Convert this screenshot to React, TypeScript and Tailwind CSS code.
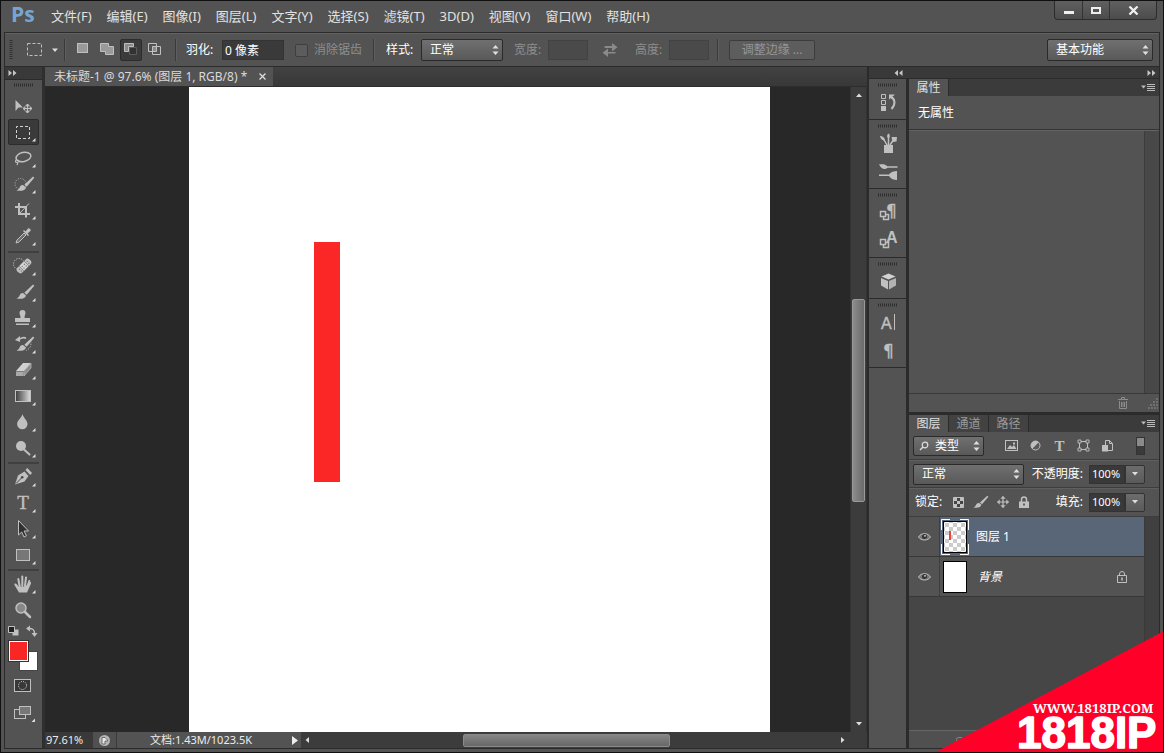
import React, { useState } from "react";
import type { ReactNode } from "react";

const INK = "#c0c0c0";

function Brush() {
  return (
    <>
      <path d="M25 5.5l1.3 1.2-7.6 9-2.4-2z" fill={INK} />
      <path d="M15.4 14.2l2.6 2.2c-.6 3-4.600 4-9.500 3 2-.6 2.600-1.800 3.200-3.100.7-1.700 2.200-2.600 3.700-2.100z" fill={INK} />
    </>
  );
}

function MoveCross({ x, y, r }: { x: number; y: number; r: number }) {
  return (
    <g transform={`translate(${x} ${y})`}>
      <path d={`M0 ${-r}V${r}M${-r} 0H${r}`} stroke={INK} strokeWidth="1.200" />
      {[0, 90, 180, 270].map((a) => (
        <path key={a} transform={`rotate(${a})`} d={`M-2 ${-r + 2.2}L0 ${-r}L2 ${-r + 2.2}`} stroke={INK} fill={INK} />
      ))}
    </g>
  );
}

type ToolDef = { name: string; plain?: boolean; icon: ReactNode };

const groups: ToolDef[][] = [
  [
    { name: "移动工具", plain: true, icon: <><path d="M7.500 7v11l3-3.500h4.500z" fill={INK} /><MoveCross x={19.5} y={15.5} r={4.5} /></> },
    { name: "矩形选框工具", icon: <rect x="8.500" y="7.500" width="13" height="12" fill="none" stroke="#d2d2d2" strokeDasharray="3 2" strokeDashoffset="1.500" /> },
    {
      name: "套索工具",
      icon: (
        <g fill="none" stroke={INK} strokeWidth="1.500">
          <ellipse cx="15.500" cy="12" rx="7.500" ry="4.500" transform="rotate(-12 15.500 12)" />
          <path d="M9 14.500c-2 .5-2 3 0 3s2.500-2 .8-2.500M9.500 17.500c.5 1 0 2-.8 2.500" strokeWidth="1.200" />
        </g>
      ),
    },
    { name: "快速选择工具", icon: <><circle cx="12.500" cy="13" r="5.500" fill="none" stroke={INK} strokeDasharray="1 1.500" /><Brush /></> },
    {
      name: "裁剪工具",
      icon: (
        <g fill="none" stroke={INK} strokeWidth="2">
          <path d="M11 6v11h11M7 10h11v10.500" />
          <path d="M12 16l9-9.500" strokeWidth="1" />
        </g>
      ),
    },
    {
      name: "吸管工具",
      icon: (
        <>
          <path d="M8 20l1-3 7-7 2 2-7 7z" fill="#6d6d6d" stroke={INK} />
          <path d="M15 8l1-1 1.500 1.500 2.500-3c1-1 3.500 1 2.500 2.500l-3 2.500 1.500 1.500-1 1z" fill={INK} />
        </>
      ),
    },
  ],
  [
    {
      name: "污点修复画笔工具",
      icon: (
        <>
          <circle cx="11" cy="11" r="5.500" fill="none" stroke="#d8d8d8" strokeDasharray="1 1.500" />
          <g transform="rotate(-45 16 13)">
            <rect x="7.500" y="9.500" width="17" height="7" rx="3" fill={INK} />
            <rect x="12.500" y="9.500" width="7" height="7" fill="#d5d5d5" stroke="#777" strokeWidth=".7" />
            <path d="M14 12h1M17 12h1M14 14.500h1M17 14.500h1M10 12h1M10 14.500h1M21 12h1M21 14.500h1" stroke="#555" />
          </g>
        </>
      ),
    },
    { name: "画笔工具", icon: <Brush /> },
    {
      name: "仿制图章工具",
      icon: <path d="M14.500 5a3 3 0 0 1 3 3c0 1.500-1 2-1 5h5.500v4H7v-4h5.500c0-3-1-3.500-1-5a3 3 0 0 1 3-3zM8 18.500h13V20H8z" fill={INK} />,
    },
    {
      name: "历史记录画笔工具",
      icon: (
        <>
          <Brush />
          <path d="M11 8.500c3-2 6-2 7-1" fill="none" stroke={INK} strokeWidth="1.500" />
          <path d="M12 5v6L7 9z" fill={INK} />
          <path d="M22.500 10c1.500 5-1 8-4.500 9.500" fill="none" stroke={INK} strokeDasharray="1.200 1.500" />
        </>
      ),
    },
    {
      name: "橡皮擦工具",
      icon: (
        <>
          <path d="M8 14l7-8h8l-7 8z" fill="#d0d0d0" />
          <path d="M8 14.500h7.500V19H8z" fill="#a9a9a9" />
          <path d="M16 14.500l7-8V11l-7 8z" fill="#8a8a8a" stroke={INK} strokeWidth=".7" />
        </>
      ),
    },
    {
      name: "渐变工具",
      icon: (
        <>
          <defs>
            <linearGradient id="ramp"><stop stopColor="#3c3c3c" /><stop offset="1" stopColor="#dedede" /></linearGradient>
          </defs>
          <rect x="7.500" y="7.500" width="15" height="11" fill="url(#ramp)" stroke={INK} />
        </>
      ),
    },
    { name: "模糊工具", icon: <path d="M14.500 5c1 4 5 6.500 5 10a5.200 5.200 0 0 1-10.400 0c0-3.500 4.400-6 5.400-10z" fill={INK} /> },
    { name: "减淡工具", icon: <><circle cx="13" cy="11" r="5" fill={INK} /><path d="M16 14.500l5.500 5" stroke={INK} strokeWidth="2" strokeLinecap="round" /></> },
  ],
  [
    {
      name: "钢笔工具",
      icon: (
        <>
          <path d="M7 20.500L10 11.500l6.500-4 4 4.500-4 5.500z" fill={INK} />
          <path d="M8 19.500l5.500-5.500" stroke="#484848" />
          <circle cx="14.200" cy="13.200" r="1.300" fill="#484848" />
          <path d="M17.500 6l1.800-2 4.700 5-1.800 2z" fill={INK} />
        </>
      ),
    },
    { name: "横排文字工具", icon: <text x="15" y="19" textAnchor="middle" fontFamily="Liberation Serif, serif" fontSize="19" fill={INK} stroke={INK} strokeWidth=".4">T</text> },
    { name: "路径选择工具", icon: <path d="M10.500 4.500V19l3.200-3 2.300 5 2.400-1.200-2.300-4.800h4.400z" fill="#303030" stroke={INK} /> },
    { name: "矩形工具", icon: <rect x="8.500" y="7.500" width="13" height="11" fill="#777" stroke={INK} /> },
  ],
  [
    {
      name: "抓手工具",
      icon: (
        <>
          <path d="M11 21.500L6.500 14c-.8-1.500 1.300-2 2.200-.8L11 16l6.500-.5 3.500-4c1-1.200 2.500-.3 2 1l-4 9z" fill={INK} />
          <path d="M11.800 16L10.300 8M14.300 15V5.500M17 15l1-8.500M19.300 16l2-6" stroke={INK} strokeWidth="2" strokeLinecap="round" />
        </>
      ),
    },
    {
      name: "缩放工具",
      plain: true,
      icon: (
        <>
          <circle cx="13" cy="11" r="5" fill="#888" stroke={INK} strokeWidth="1.500" />
          <path d="M17 15l5 5" stroke={INK} strokeWidth="2.500" strokeLinecap="round" />
        </>
      ),
    },
  ],
];

function Arrows({ className = "" }: { className?: string }) {
  return (
    <svg width="7" height="10" viewBox="0 0 7 10" aria-hidden="true" className={`pointer-events-none absolute ${className}`}>
      <path d="M3.500 0L6.500 3.500h-6zM3.500 10L.5 6.500h6z" fill="#e0e0e0" />
    </svg>
  );
}

function Picker({ id, label, options, className = "" }: { id: string; label?: string; options: string[]; className?: string }) {
  return (
    <span className={`relative flex items-center ${className}`}>
      <select
        id={id}
        aria-label={label}
        className="h-full w-full appearance-none rounded-xs border border-[#2a2a2a] bg-linear-to-b from-[#707070] to-[#595959] pl-2 text-xs leading-4 text-white outline-none"
      >
        {options.map((o) => <option key={o}>{o}</option>)}
      </select>
      <Arrows className="right-1" />
    </span>
  );
}

function Chevrons({ flip = false }: { flip?: boolean }) {
  return (
    <svg width="9" height="6" viewBox="0 0 9 6" aria-hidden="true" className={flip ? "rotate-180" : ""}>
      <path d="M0.500 0L4 3 .5 6zM5 0l3.500 3L5 6z" fill="#c6c6c6" />
    </svg>
  );
}

function Grip() {
  return (
    <svg width="20" height="4" viewBox="0 0 20 4" aria-hidden="true">
      <path d="M0 2H20" stroke="#2e2e2e" strokeWidth="3" strokeDasharray="1 1" />
    </svg>
  );
}

function PanelMenu() {
  return (
    <button aria-label="面板菜单" className="mr-1 ml-auto flex h-4 items-center self-center">
      <svg width="14" height="9" viewBox="0 0 14 9" aria-hidden="true">
        <path d="M0 2.500h5L2.500 5.500z" fill="#bbb" />
        <path d="M6 1.500h8M6 3.500h8M6 5.500h8M6 7.500h8" stroke="#bbb" />
      </svg>
    </button>
  );
}

function Divider({ className = "" }: { className?: string }) {
  return <span className={`h-[22px] w-0.5 shrink-0 border-r border-l border-r-[#5e5e5e] border-l-[#3a3a3a] ${className}`} />;
}

const menus = ["文件(F)", "编辑(E)", "图像(I)", "图层(L)", "文字(Y)", "选择(S)", "滤镜(T)", "3D(D)", "视图(V)", "窗口(W)", "帮助(H)"];

function MenuBar() {
  return (
    <header className="flex h-[31px] shrink-0 items-start">
      <span className="ml-[10px] w-[34px] font-['Open_Sans',sans-serif] text-[21px] leading-[27px] font-bold text-[#78a5d0]">Ps</span>
      <nav className="flex flex-1 gap-[15px] pt-[6px] pl-[6px]">
        {menus.map((m) => (
          <button key={m} className="text-[13px] leading-[18px] whitespace-nowrap text-[#e2e2e2]">{m}</button>
        ))}
      </nav>
      <div className="mr-[6px] flex h-[19px] rounded-b border border-t-0 border-[#2c2c2c] bg-linear-to-b from-[#606060] to-[#4c4c4c]">
        <button aria-label="最小化" className="flex w-7 items-center justify-center border-r border-[#333]">
          <span className="mt-[5px] h-[3px] w-[10px] bg-[#eee]" />
        </button>
        <button aria-label="最大化" className="flex w-[27px] items-center justify-center border-r border-[#333]">
          <span className="h-[7px] w-[10px] border-2 border-[#eee]" />
        </button>
        <button aria-label="关闭" className="flex w-[46px] items-center justify-center">
          <svg width="11" height="9" viewBox="0 0 11 9" aria-hidden="true"><path d="M1.500.5l8 8M9.500.5l-8 8" stroke="#eee" strokeWidth="2.300" /></svg>
        </button>
      </div>
    </header>
  );
}

const modes: { name: string; icon: ReactNode }[] = [
  { name: "新选区", icon: <rect x="4.500" y="3.500" width="10" height="9" fill="#9a9a9a" stroke={INK} /> },
  { name: "添加到选区", icon: <path d="M3.500 3.500h8v3h5v8h-8v-3h-5z" fill="#9a9a9a" stroke={INK} /> },
  { name: "从选区减去", icon: <><path d="M3.500 3.500h9v3h-5v5h-4z" fill="#8a8a8a" stroke={INK} /><path d="M8.500 7.500h7v7h-7z" fill="#333" stroke="#5c5c5c" /></> },
  { name: "与选区交叉", icon: <><path d="M7 6h5v5H7z" fill="#8a8a8a" /><path d="M3.500 3.500h8v8h-8zM7.500 6.500h8v8h-8z" fill="none" stroke={INK} /></> },
];

function OptionsBar() {
  const [mode, setMode] = useState(2);
  return (
    <section aria-label="选项" className="flex h-[34px] shrink-0 items-center border-t border-b border-t-[#626262] border-b-[#2b2b2b] text-xs leading-4 text-white">
      <svg width="4" height="20" viewBox="0 0 4 20" aria-hidden="true" className="ml-1 shrink-0"><path d="M2 0V20" stroke="#333" strokeWidth="3" strokeDasharray="1 1" /></svg>
      <button aria-label="矩形选框工具预设" className="ml-[13px] flex shrink-0 items-center">
        <svg width="34" height="16" viewBox="0 0 34 16" aria-hidden="true">
          <rect x="1.500" y="1.500" width="14" height="12" fill="none" stroke={INK} strokeDasharray="3 2" />
          <path d="M26 6.500h6l-3 3.500z" fill="#ddd" />
        </svg>
      </button>
      <Divider className="ml-1" />
      <div className="ml-[6px] flex gap-0.5">
        {modes.map((m, i) => (
          <button
            key={m.name}
            aria-label={m.name}
            aria-pressed={mode === i}
            onClick={() => setMode(i)}
            className={mode === i ? "size-[22px] rounded-xs border border-[#2c2c2c] bg-[#3b3b3b]" : "size-[22px] border border-transparent"}
          >
            <svg width="20" height="20" viewBox="0 0 20 20" aria-hidden="true">{m.icon}</svg>
          </button>
        ))}
      </div>
      <Divider className="ml-[9px]" />
      <label htmlFor="feather" className="ml-[9px] w-[36px] shrink-0 whitespace-nowrap">羽化:</label>
      <input id="feather" defaultValue="0 像素" className="h-5 w-[62px] border border-[#333] bg-[#3a3a3a] px-0.5 outline-none" />
      <label className="ml-[11px] flex shrink-0 items-center gap-[6px] text-[#8e8e8e]">
        <input type="checkbox" disabled className="size-[13px] appearance-none rounded-xs border border-[#3f3f3f] bg-[#5c5c5c]" />
        消除锯齿
      </label>
      <Divider className="ml-[11px]" />
      <label htmlFor="style" className="ml-[11px] w-[35px] shrink-0 whitespace-nowrap">样式:</label>
      <Picker id="style" options={["正常", "固定比例", "固定大小"]} className="h-[22px] w-[82px]" />
      <label htmlFor="sel-w" className="ml-[11px] w-[34px] shrink-0 whitespace-nowrap text-[#8e8e8e]">宽度:</label>
      <input id="sel-w" disabled className="h-5 w-10 border border-[#424242] bg-[#4a4a4a]" />
      <button aria-label="高度和宽度互换" disabled className="ml-[14px]">
        <svg width="16" height="14" viewBox="0 0 16 14" aria-hidden="true">
          <path d="M3 3h7V.5l5 4.300H3z" fill="#8a8a8a" />
          <path d="M10 0l5.500 4.200L10 8.500V5H2.500V3.500H10zM6 5.500L.5 9.800 6 14v-3.500h7.500V9H6z" fill="#8a8a8a" />
        </svg>
      </button>
      <label htmlFor="sel-h" className="ml-[17px] w-[34px] shrink-0 whitespace-nowrap text-[#8e8e8e]">高度:</label>
      <input id="sel-h" disabled className="h-5 w-10 border border-[#424242] bg-[#4a4a4a]" />
      <Divider className="ml-2" />
      <button disabled className="ml-[10px] h-5 w-[86px] shrink-0 rounded-xs border border-[#3c3c3c] bg-[#5d5d5d] leading-4 text-[#959595]">调整边缘 ...</button>
      <Picker id="workspace" label="工作区" options={["基本功能", "绘画", "摄影"]} className="mr-[6px] ml-auto h-[22px] w-[106px]" />
    </section>
  );
}

function Toolbar() {
  const [active, setActive] = useState("矩形选框工具");
  return (
    <aside aria-label="工具" className="flex w-10 shrink-0 flex-col border-r-3 border-[#2f2f2f] bg-[#535353]">
      <div className="flex h-[13px] shrink-0 items-center border-b border-[#2b2b2b] bg-[#393939] pl-[3px]"><Chevrons /></div>
      <div className="flex h-[13px] shrink-0 justify-center pt-[3px]"><Grip /></div>
      {groups.map((g, gi) => (
        <div key={gi} className={gi ? "mx-[3px] border-t-2 border-[#404040] pb-px" : "mx-[3px] pb-0.5"}>
          {g.map((t) => (
            <button
              key={t.name}
              aria-label={t.name}
              aria-pressed={t.name === active}
              onClick={() => setActive(t.name)}
              className={t.name === active ? "block h-[26px] w-[31px] rounded-xs border border-[#2b2b2b] bg-[#3a3a3a]" : "block h-[26px] w-[31px] border border-transparent"}
            >
              <svg width="29" height="24" viewBox="1 1 29 24" aria-hidden="true">
                {t.icon}
                {!t.plain && <path d="M27.500 19v3.500H24z" fill="#ddd" />}
              </svg>
            </button>
          ))}
        </div>
      ))}
      <div className="flex h-[14px] items-center pl-[3px]">
        <button aria-label="默认前景色和背景色">
          <svg width="12" height="12" viewBox="0 0 12 12" aria-hidden="true"><path d="M4.500 4.500h6v6h-6z" fill={INK} /><path d="M.5 1.500h6v6h-6z" fill="#222" stroke={INK} /></svg>
        </button>
        <button aria-label="切换前景色和背景色" className="ml-[6px]">
          <svg width="12" height="12" viewBox="0 0 12 12" aria-hidden="true">
            <path d="M3 3.500c4 0 5.500 1 5.500 5" fill="none" stroke={INK} strokeWidth="1.500" />
            <path d="M4 .5v6l-4-3zM5.500 8h6l-3 4z" fill={INK} />
          </svg>
        </button>
      </div>
      <div className="mt-[3px] grid h-[30px] shrink-0 grid-cols-[10px_9px_10px] grid-rows-[10px_10px_10px] pl-1">
        <button aria-label="背景色" className="col-span-2 col-start-2 row-span-2 row-start-2 border border-[#444] bg-white" />
        <button aria-label="前景色" className="z-10 col-span-2 col-start-1 row-span-2 row-start-1 border border-white bg-[#f92626] outline outline-[#333]" />
      </div>
      <button aria-label="以快速蒙版模式编辑" className="mt-2 ml-[9px] h-[14px] w-[18px]">
        <svg width="18" height="14" viewBox="0 0 18 14" aria-hidden="true">
          <rect x=".5" y=".5" width="16" height="12" fill="#383838" stroke={INK} />
          <circle cx="8.500" cy="6.500" r="4" fill="none" stroke="#ddd" strokeDasharray="1 1.100" />
        </svg>
      </button>
      <button aria-label="更改屏幕模式" className="mt-[13px] ml-[9px] h-4 w-[22px]">
        <svg width="22" height="16" viewBox="0 0 22 16" aria-hidden="true">
          <rect x=".5" y="3.500" width="11" height="9" fill="#555" stroke={INK} />
          <rect x="5.500" y=".5" width="11" height="8" fill="#777" stroke={INK} />
          <path d="M21 12.500V16h-3.500z" fill="#ddd" />
        </svg>
      </button>
    </aside>
  );
}

function DocumentArea() {
  return (
    <main className="flex min-w-0 flex-1 flex-col">
      <div className="flex h-5 shrink-0 border-b border-[#2c2c2c] bg-linear-to-b from-[#424242] to-[#383838]">
        <div className="flex items-center bg-[#535353] pr-[5px] pl-[9px] text-xs leading-4 whitespace-nowrap text-[#dadada]">
          <span className="w-[202px]">未标题-1 @ 97.6% (图层 1, RGB/8) *</span>
          <button aria-label="关闭文档" className="flex size-3 items-center justify-center">
            <svg width="7" height="7" viewBox="0 0 7 7" aria-hidden="true"><path d="M.5.5l6 6M6.500.5l-6 6" stroke="#ddd" strokeWidth="1.300" /></svg>
          </button>
        </div>
      </div>
      <div className="flex min-h-0 flex-1">
        <div className="grid min-w-0 flex-1 grid-cols-[144fr_581px_80fr] bg-[#282828]">
          <div className="col-start-2 bg-white pt-[155px] pl-[125px]">
            <div className="h-[240px] w-[26px] bg-[#fb2626]" />
          </div>
        </div>
        <div aria-label="垂直滚动条" className="flex w-[17px] flex-col items-center border-x border-[#333] bg-[#3c3c3c] py-[6px]">
          <svg width="6" height="4" viewBox="0 0 6 4" aria-hidden="true"><path d="M0 4l3-3.500L6 4z" fill="#ddd" /></svg>
          <span className="flex-[203]" />
          <span className="w-[13px] flex-[202] rounded-xs border border-[#999] bg-linear-to-r from-[#8c8c8c] to-[#6b6b6b]" />
          <span className="flex-[221]" />
          <svg width="6" height="4" viewBox="0 0 6 4" aria-hidden="true"><path d="M0 0l3 3.500L6 0z" fill="#ddd" /></svg>
        </div>
      </div>
      <footer className="flex h-4 shrink-0 items-center bg-[#3c3c3c] text-[11px] leading-4 text-[#ececec]">
        <input aria-label="缩放比例" defaultValue="97.61%" className="h-4 w-[48px] bg-[#393939] pl-px outline-none" />
        <span className="flex h-4 w-6 items-center justify-center border-r border-[#3a3a3a] bg-[#505050]">
          <svg width="11" height="11" viewBox="0 0 11 11" aria-hidden="true">
            <circle cx="5.500" cy="5.500" r="5.500" fill="#b5b5b5" />
            <path d="M3 2.500h3l2.500 2.500v1H6v3H3z" fill="#e8e8e8" stroke="#555" strokeWidth=".8" />
          </svg>
        </span>
        <span className="h-4 w-[172px] bg-[#535353] pr-1 text-center whitespace-nowrap">文档:1.43M/1023.5K</span>
        <button aria-label="状态栏选项" className="flex h-4 w-3 items-center justify-center bg-[#535353]">
          <svg width="6" height="9" viewBox="0 0 6 9" aria-hidden="true"><path d="M0 0l6 4.500L0 9z" fill="#eee" /></svg>
        </button>
        <div aria-label="水平滚动条" className="flex flex-1 items-center pl-1">
          <svg width="4" height="6" viewBox="0 0 4 6" aria-hidden="true"><path d="M4 0v6L.5 3z" fill="#ddd" /></svg>
          <span className="flex-[154]" />
          <span className="h-[13px] flex-[206] rounded-xs border border-[#8a8a8a] bg-linear-to-b from-[#858585] to-[#686868]" />
          <span className="flex-[171]" />
          <svg width="4" height="6" viewBox="0 0 4 6" aria-hidden="true"><path d="M0 0v6l3.500-3z" fill="#ddd" /></svg>
          <span className="w-[22px]" />
        </div>
      </footer>
    </main>
  );
}

function Pilcrow({ x, y }: { x: number; y: number }) {
  return <text x={x} y={y} fontFamily="DejaVu Sans, sans-serif" fontSize="17" fill={INK} stroke={INK} strokeWidth=".3">¶</text>;
}

const dock: { name: string; icon: ReactNode }[][] = [
  [
    {
      name: "历史记录",
      icon: (
        <>
          <path d="M3.500 4.500h4v4h-4zM3.500 10.500h4v4h-4z" fill="none" stroke={INK} />
          <path d="M3 16h5v5H3z" fill={INK} />
          <path d="M13 7c4 2 5 7 .5 12" fill="none" stroke={INK} strokeWidth="2" />
          <path d="M11 9.500V4.500h6z" fill={INK} />
        </>
      ),
    },
  ],
  [
    {
      name: "画笔预设",
      icon: (
        <>
          <path d="M6 13h9v8H6z" fill={INK} />
          <path d="M9 13L5 6M10.500 13V4M12 13l4-6" stroke={INK} strokeWidth="1.500" />
          <path d="M2 4c2 0 4.500 1 5 4.500C4.500 8.500 2.500 7 2 4zM10.500 1.500c2 1.500 1.500 4 0 5-1.500-1-2-3.500 0-5zM13.500 5h5.500L18.500 9.500l-4 .5z" fill={INK} />
        </>
      ),
    },
    {
      name: "画笔",
      icon: (
        <>
          <path d="M1 4c3 1 4-1 8.500 2.200h10v1.600h-10C7 10 3 9.500 1 4z" fill={INK} />
          <path d="M1 14.500h10c2-3 5-3.500 8-3.500v9c-3 0-6-1-8-4H1z" fill={INK} />
        </>
      ),
    },
  ],
  [
    {
      name: "段落样式",
      icon: (
        <>
          <Pilcrow x={8} y={16} />
          <path d="M5.500 13.500h5v5h-5z" fill="#535353" stroke={INK} strokeWidth="1.500" />
          <path d="M2.500 10.500h5v5h-5z" fill="#535353" stroke={INK} strokeWidth="1.500" />
        </>
      ),
    },
    {
      name: "字符样式",
      icon: (
        <>
          <text x="8" y="14" fontFamily="Liberation Sans, sans-serif" fontSize="16" fill={INK} fontWeight="700">A</text>
          <path d="M5.500 13.500h5v5h-5z" fill="#535353" stroke={INK} strokeWidth="1.500" />
          <path d="M2.500 10.500h5v5h-5z" fill="#535353" stroke={INK} strokeWidth="1.500" />
        </>
      ),
    },
  ],
  [
    {
      name: "3D",
      icon: (
        <>
          <path d="M10.500 4.500l7 3-7 3-7-3z" fill="#d2d2d2" />
          <path d="M3 9l7 3v8.500l-7-4z" fill={INK} />
          <path d="M18 9l-7 3v8.500l7-4z" fill="#b2b2b2" />
        </>
      ),
    },
  ],
  [
    { name: "字符", icon: <><text x="3" y="18" fontFamily="Liberation Sans, sans-serif" fontSize="16" fill={INK} stroke={INK} strokeWidth=".4">A</text><path d="M16.500 3v16" stroke={INK} /></> },
    { name: "段落", icon: <Pilcrow x={5} y={18} /> },
  ],
];

function Dock() {
  return (
    <div className="flex w-[37px] flex-col">
      {dock.map((g, i) => (
        <div key={i} className="flex flex-col items-center border-b border-[#2b2b2b] pt-[4px]">
          <Grip />
          {g.map((b, j) => (
            <button key={b.name} aria-label={b.name} className={j ? "mb-[4px] h-[24px]" : g.length > 1 ? "mt-1 mb-[4px] h-[24px]" : "mt-px mb-[3px] h-[28px]"}>
              <svg width="20" height="24" viewBox="0 0 20 24" aria-hidden="true">{b.icon}</svg>
            </button>
          ))}
        </div>
      ))}
    </div>
  );
}

function Properties() {
  return (
    <section aria-label="属性" className="flex flex-col">
      <div className="flex h-[17px] bg-[#3b3b3b] text-xs leading-[17px] text-[#e0e0e0]">
        <h2 className="w-10 border-r border-[#2b2b2b] bg-[#535353] text-center">属性</h2>
        <PanelMenu />
      </div>
      <p className="h-[34px] border-b border-[#333] px-[9px] text-xs leading-[34px] text-white">无属性</p>
      <div className="flex h-[263px] border-t border-[#636363]">
        <div className="flex-1" />
        <div className="w-[15px] border-l border-[#3d3d3d] bg-[#484848]" />
      </div>
      <div className="flex h-[19px] items-center justify-end border-t border-[#383838]">
        <button aria-label="删除" className="mr-[18px]">
          <svg width="12" height="12" viewBox="0 0 12 12" aria-hidden="true"><path d="M1 2.500h10M4.500 2V.5h3V2M2.500 4v7.500h7V4M4.500 5v5M6 5v5M7.500 5v5" fill="none" stroke="#8c8c8c" /></svg>
        </button>
        <svg width="12" height="12" viewBox="0 0 12 12" aria-hidden="true"><path d="M9 2h2M6 5h5M3 8h8M1 11h10" stroke="#7a7a7a" strokeDasharray="2 1" strokeWidth="1.500" /></svg>
      </div>
    </section>
  );
}

function Percent({ id }: { id: string }) {
  return (
    <span className="flex h-[19px] w-[56px]">
      <input id={id} defaultValue="100%" className="w-9 border border-[#333] bg-[#393939] pl-0.5 text-[11px] leading-4 text-white outline-none" />
      <button aria-label="展开滑块" className="flex w-5 items-center justify-center rounded-r-xs border border-[#333] bg-linear-to-b from-[#6c6c6c] to-[#5a5a5a]">
        <svg width="6" height="4" viewBox="0 0 6 4" aria-hidden="true"><path d="M0 0h6L3 3.500z" fill="#ddd" /></svg>
      </button>
    </span>
  );
}

function Eye() {
  return (
    <svg width="13" height="9" viewBox="0 0 13 9" aria-hidden="true">
      <path d="M.5 5C3 .5 10 .5 12.500 5 10 9 3 9 .5 5z" fill="#777" stroke={INK} />
      <circle cx="6.500" cy="4.500" r="2.500" fill="#333" />
      <circle cx="7" cy="3.800" r=".9" fill="#ddd" />
    </svg>
  );
}

function LayerThumb({ transparent }: { transparent: boolean }) {
  return transparent ? (
    <svg width="28" height="36" viewBox="0 0 28 36" aria-hidden="true">
      <defs>
        <pattern id="checks" width="8" height="8" patternUnits="userSpaceOnUse">
          <path d="M0 0h8v8H0z" fill="#fff" /><path d="M0 0h4v4H0zM4 4h4v4H4z" fill="#ccc" />
        </pattern>
      </defs>
      <rect x="2.500" y="2.500" width="23" height="31" fill="url(#checks)" stroke="#000" />
      <rect x="8" y="12" width="2" height="9" fill="#f04040" />
      <path d="M9 .5H.5V11M19 .5h8.500V11M9 35.500H.5V25M19 35.500h8.500V25" fill="none" stroke="#fff" />
    </svg>
  ) : (
    <svg width="28" height="36" viewBox="0 0 28 36" aria-hidden="true">
      <rect x="2.500" y="2.500" width="23" height="31" fill="#fff" stroke="#000" />
    </svg>
  );
}

const filters: { name: string; icon: ReactNode }[] = [
  { name: "像素图层滤镜", icon: <><rect x=".5" y="1.500" width="12" height="10" fill="none" stroke={INK} /><path d="M2 10l3-4 2 2 2-2 2.500 4zM8 3.500h2v2H8z" fill={INK} /></> },
  { name: "调整图层滤镜", icon: <><circle cx="6.500" cy="6.500" r="4.500" fill="#5a5a5a" stroke={INK} /><path d="M3.300 9.700a4.500 4.500 0 0 1 6.400-6.400z" fill={INK} /></> },
  { name: "文字图层滤镜", icon: <text x="6.500" y="11.500" textAnchor="middle" fontFamily="Liberation Serif, serif" fontWeight="700" fontSize="15" fill={INK}>T</text> },
  { name: "形状图层滤镜", icon: <><path d="M2.500 2.500h8v8h-8z" fill="none" stroke={INK} /><path d="M1 1h3v3H1zM9 1h3v3H9zM1 9h3v3H1zM9 9h3v3H9z" fill="#535353" stroke={INK} strokeWidth=".9" /></> },
  { name: "智能对象滤镜", icon: <><path d="M4.500 6V1.500h4l3 3v7H7" fill="none" stroke={INK} /><path d="M8.500 1.500v3h3" fill="none" stroke={INK} /><path d="M1 6h6v6.500H1z" fill={INK} /></> },
];

function Layers() {
  const [selected, setSelected] = useState(0);
  return (
    <section aria-label="图层" className="flex min-h-0 flex-1 flex-col border-t-3 border-[#2b2b2b]">
      <div role="tablist" className="flex h-[17px] shrink-0 bg-[#3b3b3b] text-xs leading-[17px] text-[#9a9a9a]">
        <button role="tab" aria-selected="true" className="w-10 border-r border-[#2b2b2b] bg-[#535353] text-[#e0e0e0]">图层</button>
        <button role="tab" aria-selected="false" className="w-10 border-r border-[#2b2b2b] bg-[#424242]">通道</button>
        <button role="tab" aria-selected="false" className="w-10 border-r border-[#2b2b2b] bg-[#424242]">路径</button>
        <PanelMenu />
      </div>
      <div className="flex h-7 shrink-0 items-center border-b border-[#3d3d3d] pr-[14px] pl-1">
        <span className="relative flex h-5 w-[71px] items-center">
          <select aria-label="滤镜类型" className="h-full w-full appearance-none rounded-xs border border-[#2a2a2a] bg-linear-to-b from-[#707070] to-[#595959] pl-[21px] text-xs leading-4 text-white outline-none">
            <option>类型</option>
            <option>名称</option>
          </select>
          <svg width="10" height="10" viewBox="0 0 10 10" aria-hidden="true" className="pointer-events-none absolute left-[6px]"><circle cx="6" cy="4" r="2.800" fill="none" stroke="#ddd" strokeWidth="1.200" /><path d="M4 6L1 9" stroke="#ddd" strokeWidth="1.500" /></svg>
          <Arrows className="right-1" />
        </span>
        <div className="ml-[21px] flex gap-[11px]">
          {filters.map((f) => (
            <button key={f.name} aria-label={f.name}><svg width="13" height="13" viewBox="0 0 13 13" aria-hidden="true">{f.icon}</svg></button>
          ))}
        </div>
        <button aria-label="打开或关闭图层滤镜" className="ml-auto flex h-[18px] w-[9px] items-start border border-[#333] bg-[#3a3a3a]"><span className="h-2 w-full bg-[#8a8a8a]" /></button>
      </div>
      <div className="flex h-7 shrink-0 items-center border-t border-b border-t-[#5f5f5f] border-b-[#3d3d3d] pr-[14px] pl-1 text-xs leading-4 text-white">
        <Picker id="blend" label="混合模式" options={["正常", "溶解", "正片叠底"]} className="h-[21px] w-[111px]" />
        <label htmlFor="opacity" className="ml-auto pr-[6px]">不透明度:</label>
        <Percent id="opacity" />
      </div>
      <div className="flex h-[29px] shrink-0 items-center border-t border-b border-t-[#5f5f5f] border-b-[#3d3d3d] pr-[14px] pb-px pl-[6px] text-xs leading-4 text-white">
        <span className="w-[37px]">锁定:</span>
        <div className="flex gap-[7px]">
          <button aria-label="锁定透明像素"><svg width="14" height="14" viewBox="0 0 14 14" aria-hidden="true"><path d="M1.500 2.500h10v10h-10z" fill="#444" stroke={INK} /><path d="M2 3h3v3H2zM8 3h3v3H8zM5 6h3v3H5zM2 9h3v3H2zM8 9h3v3H8z" fill={INK} /></svg></button>
          <button aria-label="锁定图像像素"><svg width="16" height="14" viewBox="8 5 19 16" aria-hidden="true"><Brush /></svg></button>
          <button aria-label="锁定位置"><svg width="14" height="14" viewBox="0 0 14 14" aria-hidden="true"><MoveCross x={7} y={7} r={5.5} /></svg></button>
          <button aria-label="锁定全部"><svg width="14" height="14" viewBox="0 0 14 14" aria-hidden="true"><path d="M4.500 7V4.500a2.500 2.500 0 0 1 5 0V7" fill="none" stroke={INK} strokeWidth="1.500" /><path d="M2 6.500h10V13H2z" fill={INK} /><path d="M7 8.500v2" stroke="#444" strokeWidth="1.500" /></svg></button>
        </div>
        <label htmlFor="fill" className="ml-auto pr-[6px]">填充:</label>
        <Percent id="fill" />
      </div>
      <div className="flex min-h-0 flex-1 bg-[#464646]">
        <ul className="flex-1 text-xs text-white">
          {["图层 1", "背景"].map((name, i) => (
            <li key={name} className={selected === i ? "flex h-10 items-center border-b border-[#383838] bg-[#596678]" : "flex h-10 items-center border-b border-[#383838] bg-[#535353]"}>
              <button aria-label={`切换${name}可见性`} className="flex h-full w-[31px] items-center justify-center border-r border-[#3f3f3f] bg-[#535353]"><Eye /></button>
              <button onClick={() => setSelected(i)} className="flex h-full flex-1 items-center gap-[7px] pl-px">
                <LayerThumb transparent={i === 0} />
                <span className={i ? "pl-0.5 italic" : ""}>{name}</span>
              </button>
              {i === 1 && (
                <svg width="12" height="13" viewBox="0 0 12 13" aria-label="已锁定" className="mr-4"><path d="M3.500 6V4a2.500 2.500 0 0 1 5 0v2M1.500 5.500h9v7h-9z" fill="none" stroke={INK} /><path d="M6 7.500v3" stroke={INK} strokeWidth="1.500" /></svg>
              )}
            </li>
          ))}
        </ul>
        <div className="w-[15px] border-l border-[#3a3a3a] bg-[#404040]" />
      </div>
      <div className="flex h-[18px] shrink-0 items-center border-t border-[#666] bg-[#505050] pl-[46px]">
        <button aria-label="链接图层">
          <svg width="16" height="9" viewBox="0 0 16 9" aria-hidden="true"><path d="M7 2.500H3.500a2 2 0 0 0 0 4H7M9 2.500h3.500a2 2 0 0 1 0 4H9M5 4.500h6" fill="none" stroke="#858585" /></svg>
        </button>
      </div>
    </section>
  );
}

export default function App() {
  return (
    <div className="relative flex h-screen flex-col overflow-hidden border border-[#101010] bg-[#535353] font-['Noto_Sans','Noto_Sans_CJK_SC',sans-serif]">
      <MenuBar />
      <div className="mx-[3px] mb-[3px] flex min-h-0 flex-1 flex-col border border-[#2b2b2b]">
        <OptionsBar />
        <div className="flex min-h-0 flex-1">
          <Toolbar />
          <DocumentArea />
          <div className="flex w-[292px] shrink-0 flex-col border-l-2 border-[#2b2b2b]">
            <div className="flex h-3 shrink-0 items-center justify-between border-b border-[#2b2b2b] bg-[#393939] pr-[3px] pl-[25px]">
              <Chevrons flip />
              <Chevrons />
            </div>
            <div className="flex min-h-0 flex-1">
              <Dock />
              <div className="flex min-w-0 flex-1 flex-col border-l-3 border-[#2b2b2b]">
                <Properties />
                <Layers />
              </div>
            </div>
          </div>
        </div>
      </div>
      <svg width="230" height="122" viewBox="0 0 230 122" className="absolute -right-px -bottom-px" aria-label="WWW.1818IP.COM">
        <path d="M230 0V122H0z" fill="#ff0029" />
        <text x="99" y="82" fontFamily="Noto Serif, DejaVu Serif Condensed, Liberation Serif, serif" fontWeight="700" fontSize="13" fill="#fff">WWW.1818IP.COM</text>
        <text x="83" y="117" fontFamily="Liberation Sans, sans-serif" fontWeight="700" fontSize="44" fill="#fff" stroke="#fff" strokeWidth="1.500" strokeLinejoin="round">1818IP</text>
      </svg>
    </div>
  );
}
